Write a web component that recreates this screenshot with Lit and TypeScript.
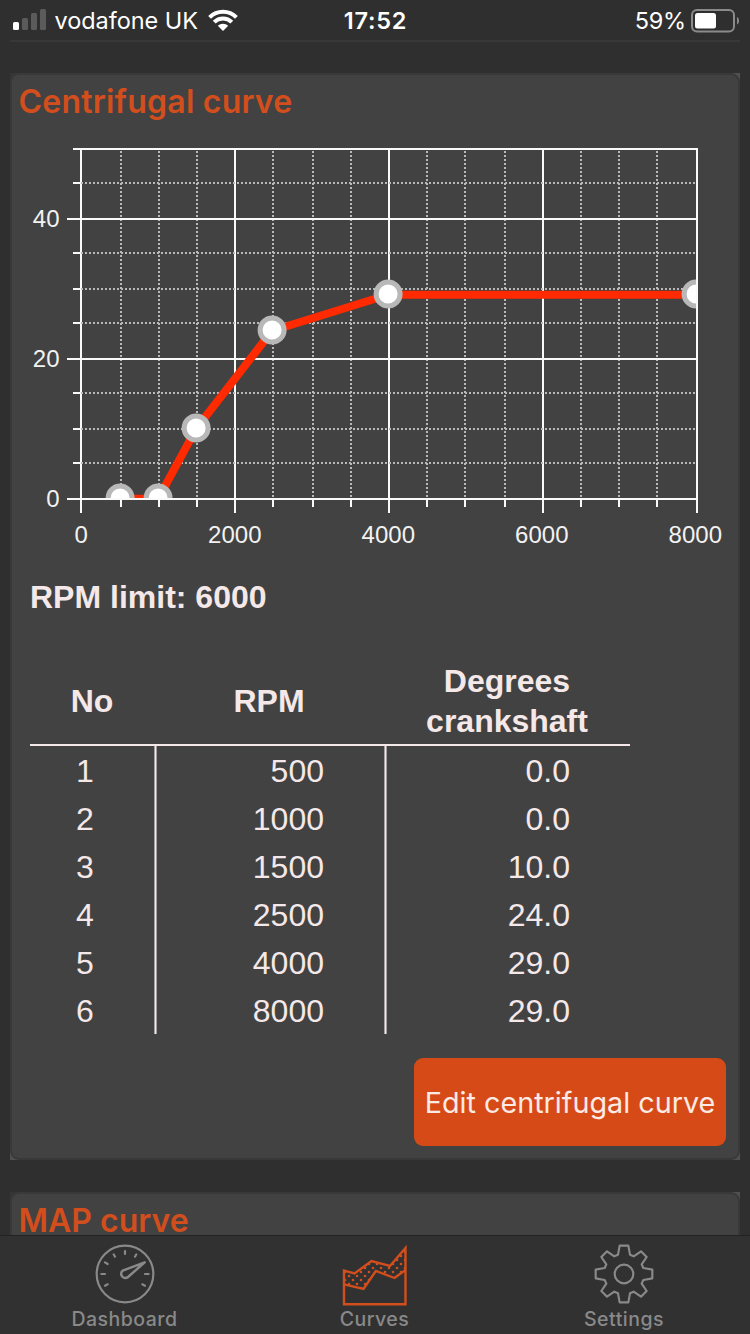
import { LitElement, html, svg, css } from "lit";
import { customElement } from "lit/decorators.js";

const POINTS: [number, number][] = [
  [500, 0],
  [1000, 0],
  [1500, 10],
  [2500, 24],
  [4000, 29],
  [8000, 29],
];

const GRID_X = [81, 121, 159, 197, 235, 273, 313, 351, 389, 427, 465, 505, 543, 581, 619, 657, 697];
const GRID_Y = [499, 463, 429, 393, 359, 323, 289, 253, 219, 183, 149];

@customElement("curve-chart")
class CurveChart extends LitElement {
  static styles = css`
    :host { display: block; height: 430px; }
    svg { display: block; }
    .label { font: 24px "Liberation Sans", Helvetica, Arial, sans-serif; fill: #f2f2f2; }
    .major { stroke: #fafafa; stroke-width: 2; }
    .minor { stroke: #b9b9b9; stroke-width: 2; stroke-dasharray: 2 2; }
    .curve { fill: none; stroke: #ff2a00; stroke-width: 8; stroke-linejoin: round; }
    .dot { fill: #fff; stroke: #b8b8b8; stroke-width: 5; }
  `;

  render() {
    const px = (v: number) => GRID_X[v / 500] - 0.9;
    const py = (v: number) => Math.round(498 - v * 7.02);
    const path = POINTS.map(([x, y]) => `${px(x)},${py(y) + 0.8}`).join(" ");
    return html`
      <svg width="726" height="430" viewBox="12 130 726 430">
        <defs><clipPath id="plot"><rect x="80" y="148" width="616" height="350" /></clipPath></defs>
        ${GRID_X.map((x, i) =>
          i % 4 === 0
            ? svg`<line class="major" x1=${x} x2=${x} y1="148" y2="513" />`
            : svg`<line class="minor" x1=${x} x2=${x} y1="151" y2="498" /><line class="major" x1=${x} x2=${x} y1="499" y2="507" />`
        )}
        ${GRID_Y.map((y, i) =>
          i % 4 === 0
            ? svg`<line class="major" x1="67" x2="698" y1=${y} y2=${y} />`
            : i === 10
            ? svg`<line class="major" x1="73" x2="698" y1=${y} y2=${y} />`
            : svg`<line class="minor" x1="81" x2="696" y1=${y} y2=${y} /><line class="major" x1="73" x2="81" y1=${y} y2=${y} />`
        )}
        <g clip-path="url(#plot)">
          <polyline class="curve" points=${path} />
          ${POINTS.map(([x, y]) => svg`<circle class="dot" cx=${px(x)} cy=${py(y)} r="12" />`)}
        </g>
        ${[0, 20, 40].map((v, i) => svg`<text class="label" x="59.5" y=${507 - i * 140} text-anchor="end">${v}</text>`)}
        ${[0, 1, 2, 3, 4].map((i) => svg`<text class="label" x=${81.3 + i * 153.5} y="543" text-anchor="middle">${i * 2000}</text>`)}
      </svg>
    `;
  }
}

@customElement("curve-table")
class CurveTable extends LitElement {
  static styles = css`
    :host {
      display: block;
      width: 600px;
      color: #f5e8e8;
      font: 32px/48px "Liberation Sans", Helvetica, Arial, sans-serif;
    }
    .head, .row { display: grid; grid-template-columns: 124px 230px 246px; }
    .head {
      height: 86px;
      align-items: center;
      text-align: center;
      font-weight: bold;
      line-height: 40px;
      border-bottom: 2px solid #f5e8e8;
    }
    .body {
      padding-top: 1px;
      height: 287px;
      background:
        linear-gradient(90deg, #a69f9f 1px, #f5e8e8 1px 2px, #a69f9f 2px) 124px 0 / 3px 100% no-repeat,
        linear-gradient(90deg, #a69f9f 1px, #f5e8e8 1px 2px, #a69f9f 2px) 354px 0 / 3px 100% no-repeat;
    }
    .no { text-align: center; padding-right: 14px; }
    .rpm { text-align: right; padding-right: 60px; }
    .deg { text-align: right; padding-right: 60px; }
  `;

  render() {
    return html`
      <div class="head"><span>No</span><span>RPM</span><span>Degrees<br />crankshaft</span></div>
      <div class="body">
        ${POINTS.map(
          ([rpm, deg], i) => html`
            <div class="row">
              <span class="no">${i + 1}</span>
              <span class="rpm">${rpm}</span>
              <span class="deg">${deg.toFixed(1)}</span>
            </div>
          `
        )}
      </div>
    `;
  }
}

const gaugeIcon = html`
  <svg width="62" height="62" viewBox="-93 -93 186 186" fill="none" stroke="#898989" stroke-width="6.5" stroke-linecap="round" stroke-linejoin="round">
    <circle r="85" />
    <path d="M0-69V-60M-34-59L-30-52M34-59L30-52M-60-35L-52-30M-71 0H-60M71 0H60M-60 35L-52 31M60 35L52 31" />
    <path d="M59-35L-7-10A12 12 0 1 0 9 9Z" stroke-width="7.5" />
  </svg>
`;

const areaIcon = html`
  <svg class="area" width="67" height="64" viewBox="0 0 67 64">
    <defs>
      <pattern id="dots" width="8" height="8" patternUnits="userSpaceOnUse" patternTransform="translate(2 3)">
        <circle cx="2" cy="2" r="1.3" fill="#d24e1c" />
        <circle cx="6" cy="6" r="1.3" fill="#d24e1c" />
      </pattern>
    </defs>
    <path d="M3 27.7L13.5 30.7L30.5 18L49 23L64.5 4V27L53.5 35L34.8 27.7L22.5 46L3 41.3Z" fill="url(#dots)" />
    <g fill="none" stroke="#d24e1c" stroke-width="2.4">
      <path d="M3 61.3V27.5L13.5 30.5L30.5 18L49 23L64.5 5V61.3Z" />
      <path d="M3 41.3L22.5 46L34.8 28L53.5 35L64.5 27" />
    </g>
  </svg>
`;

const gearIcon = html`
  <svg width="62" height="62" viewBox="-93 -93 186 186" fill="none" stroke="#898989" stroke-width="6.5" stroke-linejoin="round">
    <circle r="28" />
    <path
      d="M-13-85H13L18-58L29-53L51-68L68-51L53-29L58-18L85-13V13L58 18L53 29L68 51L51 68L29 53L18 58L13 85H-13L-18 58L-29 53L-51 68L-68 51L-53 29L-58 18L-85 13V-13L-58-18L-53-29L-68-51L-51-68L-29-53L-18-58Z"
    />
  </svg>
`;

@customElement("app-root")
class AppRoot extends LitElement {
  static styles = css`
    :host {
      display: flex;
      flex-direction: column;
      width: 750px;
      height: 1334px;
      overflow: hidden;
      background: #2f2f2f;
      font-family: Inter, "Liberation Sans", sans-serif;
    }
    .status {
      flex: none;
      box-sizing: border-box;
      height: 42px;
      margin: 0 10px;
      padding: 1px 0 0;
      display: grid;
      grid-template-columns: 1fr auto 1fr;
      align-items: center;
      border-bottom: 2px solid #383838;
      color: #fff;
      font-size: 23.5px;
      line-height: 40px;
    }
    .carrier, .power { display: flex; align-items: center; }
    .carrier { padding-left: 3px; }
    .bars, .wifi { margin-bottom: 2px; }
    .power { justify-content: flex-end; }
    .name { margin: 0 10px 0 7.5px; letter-spacing: -0.05px; }
    .time { font-weight: 600; letter-spacing: 0.8px; margin-left: 1px; }
    .percent { margin-right: 5px; letter-spacing: -0.2px; }
    .battery { margin-bottom: 1px; }
    .content {
      flex: 1;
      min-height: 0;
      overflow: hidden;
      padding: 31px 10px 0;
      display: flex;
      flex-direction: column;
      gap: 32px;
    }
    .card {
      flex: none;
      background: linear-gradient(90deg, #353535 50%, #505050 50%) top / 100% 50% no-repeat, #505050;
    }
    .inner {
      box-sizing: border-box;
      background: #424242;
      border: 2px solid #393939;
      border-radius: 9px;
      display: flex;
      flex-direction: column;
    }
    .first { height: 1087px; }
    .second { height: 300px; }
    h2 {
      margin: 7px 0 0 6.5px;
      font-size: 32px;
      font-weight: 600;
      line-height: 40px;
      color: #d24e1c;
    }
    .title-a { letter-spacing: 0.22px; }
    curve-chart { margin-top: 8px; }
    .limit {
      margin: 17px 0 41px 18px;
      font: bold 32px/40px "Liberation Sans", Helvetica, Arial, sans-serif;
      color: #f5e8e8;
    }
    curve-table { margin-left: 18px; }
    .edit {
      align-self: flex-end;
      margin: 24px 12px 0 0;
      width: 312px;
      height: 88px;
      padding: 0;
      border: 0;
      border-radius: 9px;
      background: #d64a17;
      color: #fbeae5;
      font: 28.75px Inter, sans-serif;
      white-space: nowrap;
    }
    .tabs {
      flex: none;
      box-sizing: border-box;
      height: 99px;
      padding: 7px 0 0;
      display: grid;
      grid-template-columns: 249px 251px 1fr;
      background: #313131;
      border-top: 1px solid #222;
    }
    .tab { display: flex; flex-direction: column; align-items: center; color: #898989; }
    .tab:last-child { padding-right: 2px; }
    .tab svg { display: block; }
    .tab .area { margin-bottom: -2px; }
    .caption { margin-top: 2px; font-size: 19.5px; font-weight: 500; line-height: 24px; letter-spacing: 0.5px; }
  `;

  render() {
    return html`
      <div class="status">
        <div class="carrier">
          <svg class="bars" width="34" height="22" viewBox="0 0 34 22">
            <g fill="#5b5b5b">
              <rect x="9" y="9" width="6" height="12" rx="1.5" />
              <rect x="18" y="4" width="6" height="17" rx="1.5" />
              <rect x="27" y="0" width="6" height="21" rx="1.5" />
            </g>
            <rect x="0" y="13" width="6" height="8" rx="1.5" fill="#fff" />
          </svg>
          <span class="name">vodafone UK</span>
          <svg class="wifi" width="30" height="22" viewBox="0 0 30 22" fill="none" stroke="#fff" stroke-width="4">
            <path d="M1.6 8.3A18.9 18.9 0 0 1 28.4 8.3" />
            <path d="M6.2 13.2A12.4 12.4 0 0 1 23.8 13.2" />
            <path d="M15 22L9.8 16.8A7.4 7.4 0 0 1 20.2 16.8Z" fill="#fff" stroke="none" />
          </svg>
        </div>
        <span class="time">17:52</span>
        <div class="power">
          <span class="percent">59%</span>
          <svg class="battery" width="49" height="24" viewBox="0 0 49 24">
            <rect x="1" y="1" width="42" height="21.5" rx="5" fill="none" stroke="#8b8b8b" stroke-width="2" />
            <rect x="4" y="4" width="21" height="15.5" rx="2.5" fill="#fff" />
            <path d="M46 8C48.7 9.2 48.7 14.3 46 15.5Z" fill="#8b8b8b" />
          </svg>
        </div>
      </div>
      <div class="content">
        <section class="card">
          <div class="inner first">
            <h2 class="title-a">Centrifugal curve</h2>
            <curve-chart></curve-chart>
            <div class="limit">RPM limit: 6000</div>
            <curve-table></curve-table>
            <button class="edit">Edit centrifugal curve</button>
          </div>
        </section>
        <section class="card">
          <div class="inner second"><h2>MAP curve</h2></div>
        </section>
      </div>
      <nav class="tabs">
        <div class="tab">${gaugeIcon}<span class="caption">Dashboard</span></div>
        <div class="tab">${areaIcon}<span class="caption">Curves</span></div>
        <div class="tab">${gearIcon}<span class="caption">Settings</span></div>
      </nav>
    `;
  }
}
